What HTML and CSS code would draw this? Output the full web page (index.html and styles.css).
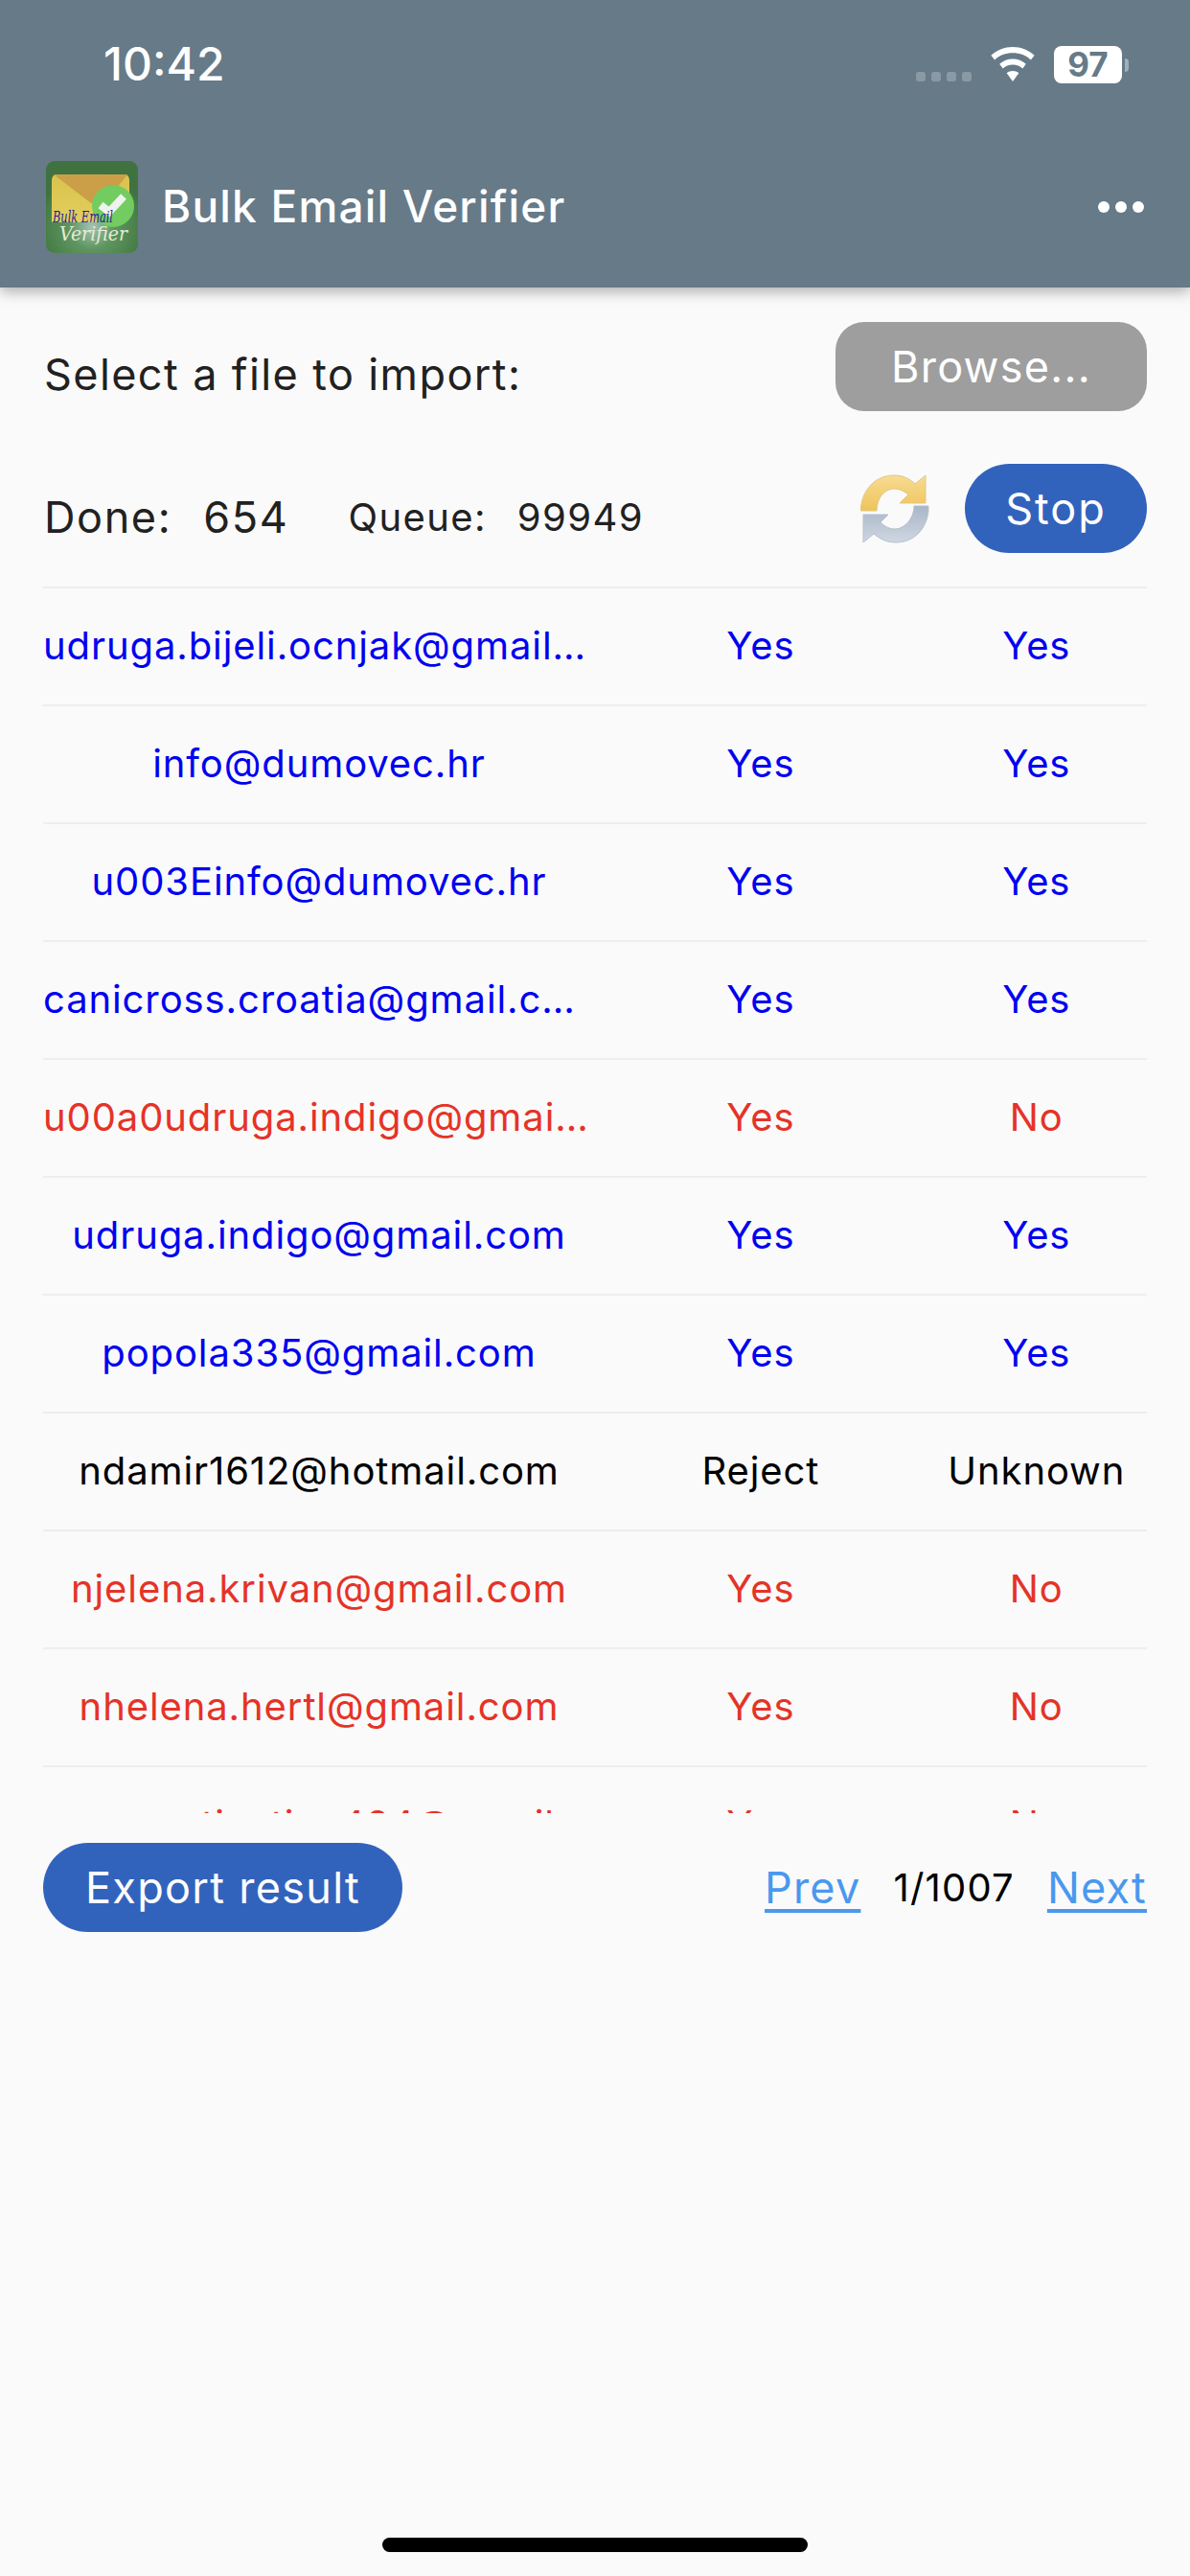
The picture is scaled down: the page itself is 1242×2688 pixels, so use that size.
FILE: index.html
```html
<!DOCTYPE html>
<html lang="en">
<head>
<meta charset="utf-8">
<title>Bulk Email Verifier</title>
<link rel="stylesheet" href="styles.css">
</head>
<body>
<div class="screen">
  <header class="appbar">
    <div class="status">
      <span class="time">10:42</span>
      <div class="status-icons">
        <div class="signal"><i></i><i></i><i></i><i></i></div>
        <svg class="wifi" width="46" height="36" viewBox="0 0 40 36" preserveAspectRatio="none"><path fill="#fff" d="M20 0C12.500 0 6 3 0.300 8.800L3.600 13.500C8 8.800 13.600 6.300 20 6.300C26.400 6.300 32 8.800 36.400 13.500L39.700 8.800C34 3 27.500 0 20 0Z"/><path fill="#fff" d="M20 12.500C15.500 12.500 11.500 14.300 8 17.800L11 22.500C13.500 19.900 16.500 18.600 20 18.600C23.500 18.600 26.500 19.900 29 22.500L32 17.800C28.500 14.300 24.500 12.500 20 12.500Z"/><path fill="#fff" d="M20 25C18 25 16 25.800 14.500 27.200L20 36L25.500 27.200C24 25.800 22 25 20 25Z"/></svg>
        <div class="battery"><span class="battery-body">97</span><span class="battery-cap"></span></div>
      </div>
    </div>
    <div class="toolbar">
      <svg class="logo" width="96" height="96" viewBox="0 0 96 96">
        <defs>
          <radialGradient id="bg" cx="0.5" cy="0.72" r="0.6"><stop offset="0" stop-color="#a3c4b8"/><stop offset="0.4" stop-color="#5e9560"/><stop offset="0.85" stop-color="#487f49"/><stop offset="1" stop-color="#3f7240"/></radialGradient>
          <linearGradient id="env" x1="0" y1="0" x2="0" y2="1"><stop offset="0" stop-color="#d9c24e"/><stop offset="1" stop-color="#e3cf5c"/></linearGradient>
        </defs>
        <rect width="96" height="96" rx="9" fill="url(#bg)"/>
        <path d="M12 14H81Q87 14 87 20V50L74 64H6V20Q6 14 12 14Z" fill="url(#env)"/>
        <path d="M8 14H85L74 28L47 44Z" fill="#cb9f48"/>
        <circle cx="70" cy="47" r="22" fill="#72cc60"/>
        <path d="M57 46L66 53L81 37" fill="none" stroke="#eef3ee" stroke-width="8"/>
        <text class="logo-top" x="7" y="64" textLength="63" lengthAdjust="spacingAndGlyphs">Bulk Email</text>
        <text class="logo-bottom" x="14" y="83" textLength="71" lengthAdjust="spacingAndGlyphs">Verifier</text>
      </svg>
      <h1 class="title">Bulk Email Verifier</h1>
      <div class="more"><i></i><i></i><i></i></div>
    </div>
  </header>

  <main class="content">
    <div class="file-row">
      <span class="file-label">Select a file to import:</span>
      <button class="btn btn-grey">Browse...</button>
    </div>
    <div class="progress-row">
      <div class="stats">
        <span class="big">Done:</span><span class="big done-val">654</span>
        <span class="small queue-label">Queue:</span><span class="small queue-val">99949</span>
      </div>
      <svg class="refresh" width="72" height="72" viewBox="0 0 72 72">
        <defs>
          <linearGradient id="gold" x1="0" y1="0" x2="0" y2="1"><stop offset="0" stop-color="#f7dc92"/><stop offset="1" stop-color="#efc35a"/></linearGradient>
          <linearGradient id="steel" x1="0" y1="0" x2="0" y2="1"><stop offset="0" stop-color="#a9b6c8"/><stop offset="1" stop-color="#cfd7e1"/></linearGradient>
        </defs>
        <path d="M0.500 38V34C3 14 17 1 35 1C45 1 52 5 57 10L68 1V30H41L50 21C45 17 40 15 35 15C25 15 17 25 17 38Z" fill="url(#gold)" stroke="#e3c682" stroke-width="1"/>
        <path d="M71 33V38C69 58 55 71 37 71C27 71 20 67 14 62L3 71V42H29L21 50C26 55 31 57 36 57C46 57 56 46 56 33Z" fill="url(#steel)" stroke="#b4c0cf" stroke-width="1"/>
      </svg>
      <button class="btn btn-blue btn-stop">Stop</button>
    </div>

    <div class="table-clip">
      <div class="row blue"><span class="cell email">udruga.bijeli.ocnjak@gmail.com</span><span class="cell mid">Yes</span><span class="cell last">Yes</span></div>
      <div class="row blue"><span class="cell email">info@dumovec.hr</span><span class="cell mid">Yes</span><span class="cell last">Yes</span></div>
      <div class="row blue"><span class="cell email">u003Einfo@dumovec.hr</span><span class="cell mid">Yes</span><span class="cell last">Yes</span></div>
      <div class="row blue"><span class="cell email">canicross.croatia@gmail.com</span><span class="cell mid">Yes</span><span class="cell last">Yes</span></div>
      <div class="row red"><span class="cell email">u00a0udruga.indigo@gmail.com</span><span class="cell mid">Yes</span><span class="cell last">No</span></div>
      <div class="row blue"><span class="cell email">udruga.indigo@gmail.com</span><span class="cell mid">Yes</span><span class="cell last">Yes</span></div>
      <div class="row blue"><span class="cell email">popola335@gmail.com</span><span class="cell mid">Yes</span><span class="cell last">Yes</span></div>
      <div class="row black"><span class="cell email">ndamir1612@hotmail.com</span><span class="cell mid">Reject</span><span class="cell last">Unknown</span></div>
      <div class="row red"><span class="cell email">njelena.krivan@gmail.com</span><span class="cell mid">Yes</span><span class="cell last">No</span></div>
      <div class="row red"><span class="cell email">nhelena.hertl@gmail.com</span><span class="cell mid">Yes</span><span class="cell last">No</span></div>
      <div class="row red"><span class="cell email">nsuzanatinatina424@gmail.com</span><span class="cell mid">Yes</span><span class="cell last">No</span></div>
    </div>

    <div class="footer-row">
      <button class="btn btn-blue btn-export">Export result</button>
      <div class="pager">
        <a class="link">Prev</a>
        <span class="page">1/1007</span>
        <a class="link">Next</a>
      </div>
    </div>
  </main>
  <div class="home"></div>
</div>
</body>
</html>
```
FILE: styles.css
```css
* { box-sizing: border-box; }
html, body { margin: 0; padding: 0; }
body { width: 1242px; height: 2688px; background: #fafafa; font-family: Inter, Roboto, sans-serif; overflow: hidden; }
.screen { position: relative; width: 1242px; height: 2688px; display: flex; flex-direction: column; }

.appbar { height: 300px; background: #667a88; box-shadow: 0 4px 14px rgba(0,0,0,.32); display: flex; flex-direction: column; flex: none; position: relative; z-index: 1; }
.status { height: 136px; padding: 44px 64px 0 108px; display: flex; justify-content: space-between; align-items: flex-start; flex: none; }
.time { color: #fff; font-size: 48px; font-weight: 500; line-height: 46px; }
.status-icons { display: flex; align-items: flex-start; padding-top: 4px; }
.signal { display: flex; gap: 6px; margin-top: 27px; margin-right: 20px; }
.signal i { width: 10px; height: 10px; border-radius: 3px; background: #8a9aa5; }
.wifi { margin-right: 20px; margin-top: 1px; }
.battery { display: flex; align-items: center; }
.battery-body { width: 71px; height: 39px; background: #fff; border-radius: 8px; color: #667a88; font-weight: 700; font-size: 35px; line-height: 39px; text-align: center; }
.battery-cap { width: 4px; height: 14px; margin-left: 3px; border-radius: 0 4px 4px 0; background: #a3afb8; }

.toolbar { flex: 1; display: flex; align-items: flex-start; padding: 32px 48px 0 48px; }
.logo { flex: none; }
.logo-top { font: italic 17px "DejaVu Serif", serif; fill: #2a1d9c; }
.logo-bottom { font: italic 21px "DejaVu Serif", serif; fill: #e6ecd2; }
.title { margin: 19px 0 0 25px; color: #fff; font-size: 46px; font-weight: 500; line-height: 56px; letter-spacing: 1.2px; flex: 1; }
.more { display: flex; gap: 6px; margin-top: 42px; }
.more i { width: 12px; height: 12px; border-radius: 50%; background: #fff; }

.content { padding: 36px 45px 0; display: flex; flex-direction: column; flex: none; }
.file-row { display: flex; justify-content: space-between; align-items: flex-start; height: 93px; }
.file-label { font-size: 45px; line-height: 56px; color: #212121; margin-top: 27px; margin-left: 1px; letter-spacing: 1.4px; }
.btn { border: 0; color: #fff; font-family: inherit; font-size: 45px; height: 93px; padding: 0; letter-spacing: 1.3px; }
.btn-grey { width: 325px; background: #9e9e9e; border-radius: 30px; }
.btn-blue { background: #3263bc; border-radius: 47px; }
.btn-stop { width: 190px; letter-spacing: 2px; }
.progress-row { display: flex; align-items: center; height: 93px; margin-top: 55px; color: #212121; }
.stats { display: flex; align-items: center; margin-top: 18px; margin-left: 1px; }
.big { font-size: 45px; letter-spacing: 1.6px; }
.done-val { margin-left: 33px; }
.small { font-size: 40px; letter-spacing: 1.4px; }
.queue-label { margin-left: 62px; }
.queue-val { margin-left: 32px; }
.refresh { margin-left: auto; margin-right: 37px; }

.table-clip { margin-top: 35px; height: 1280px; overflow: hidden; }
.row { display: grid; grid-template-columns: 5fr 3fr 2fr; height: 123px; align-items: center; padding-bottom: 3px; border-top: 2px solid #eeeeee; font-size: 40px; letter-spacing: .9px; text-align: center; }
.cell { min-width: 0; white-space: nowrap; overflow: hidden; text-overflow: ellipsis; }
.blue { color: #0000f0; }
.red { color: #e53327; }
.black { color: #000; }

.footer-row { display: flex; justify-content: space-between; align-items: center; height: 93px; margin-top: 31px; }
.btn-export { width: 375px; }
.pager { display: flex; align-items: center; gap: 34px; font-size: 45px; letter-spacing: 1.2px; }
.link { color: #4a98ee; text-decoration: underline; text-underline-offset: 6px; }
.page { font-size: 40px; color: #000; }

.home { position: absolute; left: 399px; top: 2648px; width: 444px; height: 15px; border-radius: 8px; background: #000; }
```
